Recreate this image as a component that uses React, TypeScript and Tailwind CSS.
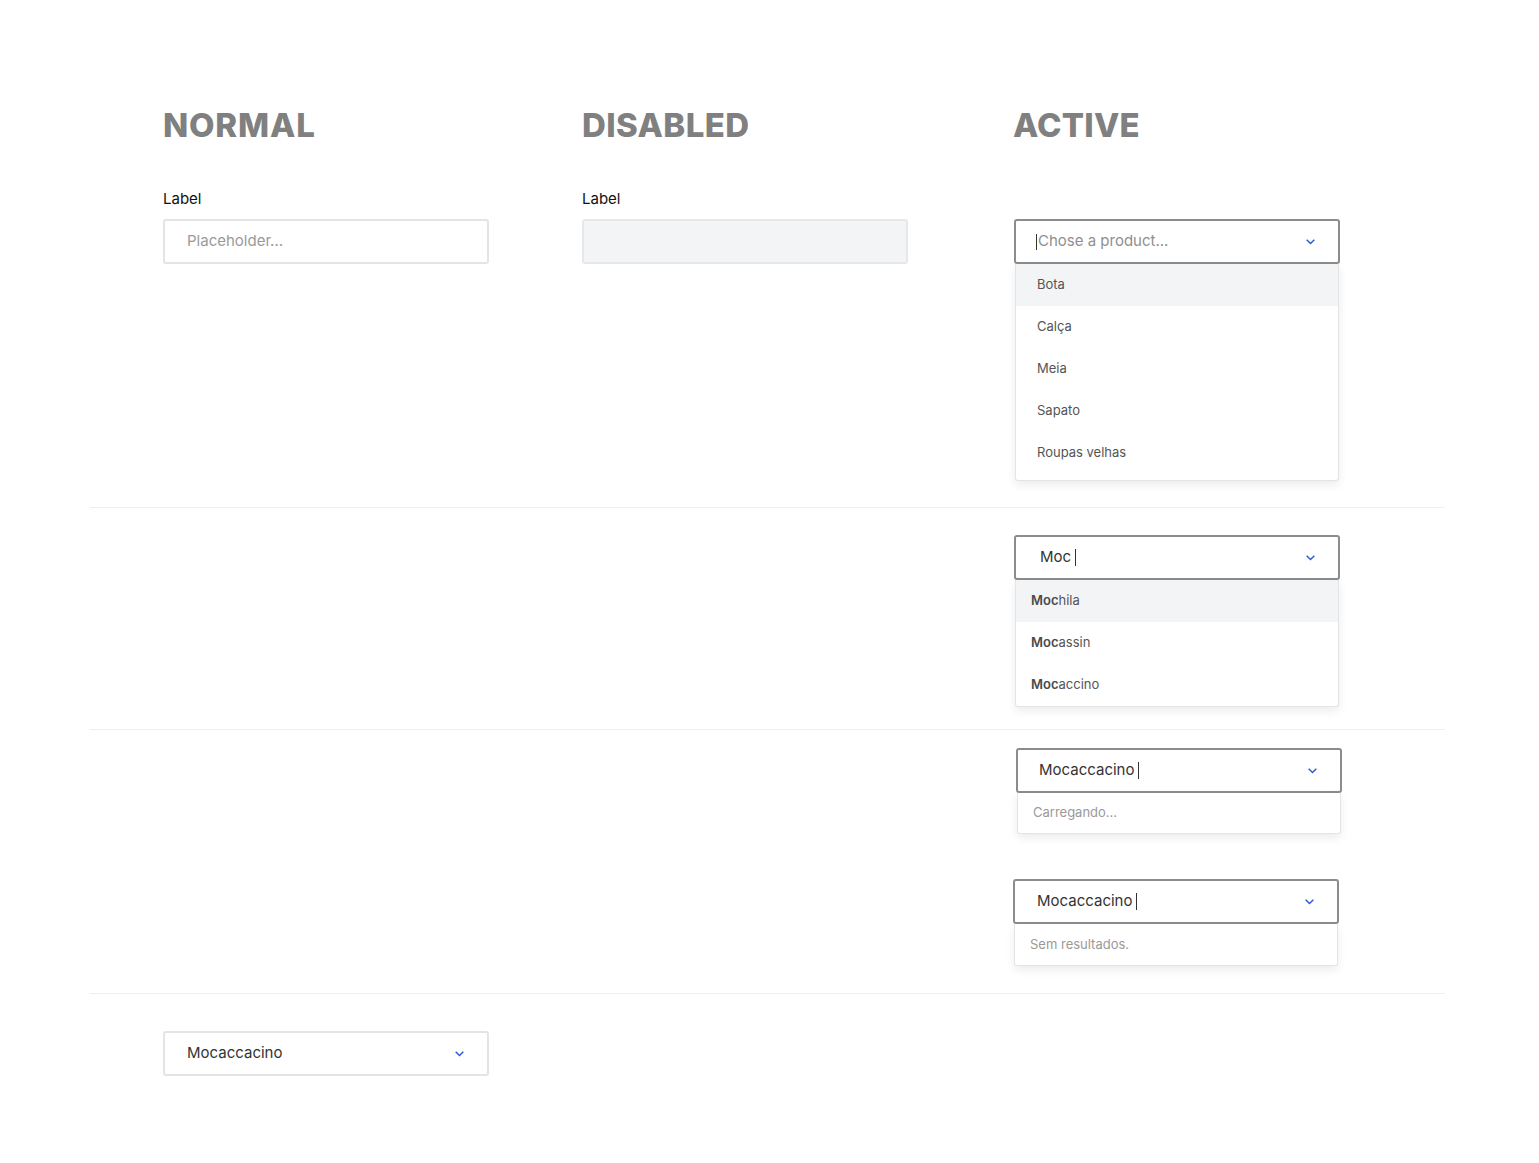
import { useState } from "react";

const Chevron = () => (
  <svg width="9" height="6" viewBox="0 0 9 6" className="shrink-0">
    <path d="M1.2 1.2l3.3 3.3 3.3-3.3" fill="none" stroke="#2f5bd8" strokeWidth="1.5" strokeLinecap="square" />
  </svg>
);

const Caret = () => <span className="inline-block w-px h-[17px] bg-[#333] align-middle ml-[4px]" />;

type ActiveInputProps = { children: React.ReactNode; pl?: string };

const ActiveInput = ({ children, pl = "pl-[23px]" }: ActiveInputProps) => (
  <div className={`flex items-center justify-between h-[45px] w-[326px] border-2 border-[#8c8c8c] rounded-[3px] bg-white ${pl} pr-[23px]`}>
    <div className="text-[15px] text-[#333] flex items-center">{children}</div>
    <Chevron />
  </div>
);

const Menu = ({ children }: { children: React.ReactNode }) => (
  <div className="w-[324px] ml-px bg-white rounded-b-[3px] border border-[#e4e4e4] border-t-0 shadow-[0_4px_10px_rgba(0,0,0,0.08)]">
    {children}
  </div>
);

const products = ["Bota", "Calça", "Meia", "Sapato", "Roupas velhas"];
const matches = ["Mochila", "Mocassin", "Mocaccino"];

const App = () => {
  const [selected] = useState<number>(0);

  return (
    <div className="min-h-screen bg-white font-['Inter',sans-serif] text-[#222]">
      <div className="w-[1355px] ml-[90px] pt-[104px]">
        {/* first row */}
        <div className="grid grid-cols-[419px_431px_326px] pl-[73px] pb-[26px] border-b border-[#efefef]">
          <div>
            <h2 className="text-[33px] leading-[42px] font-extrabold tracking-[0.8px] text-[#808080]">NORMAL</h2>
            <div className="mt-[43px] text-[15px] leading-[20px] text-[#111]">Label</div>
            <div className="mt-[10px] h-[45px] w-[326px] border-2 border-[#e4e4e4] rounded-[3px] flex items-center pl-[22px] text-[15px] text-[#9a9a9a]">
              Placeholder...
            </div>
          </div>
          <div>
            <h2 className="text-[33px] leading-[42px] font-extrabold tracking-[0.4px] text-[#808080]">DISABLED</h2>
            <div className="mt-[43px] text-[15px] leading-[20px] text-[#111]">Label</div>
            <div className="mt-[10px] h-[45px] w-[326px] border-2 border-[#e5e7eb] bg-[#f3f4f6] rounded-[3px]" />
          </div>
          <div>
            <h2 className="text-[33px] leading-[42px] font-extrabold tracking-[0.2px] text-[#808080]">ACTIVE</h2>
            <div className="mt-[73px] ml-px">
              <ActiveInput pl="pl-[20px]">
                <span className="inline-block w-px h-[16px] bg-[#333] mr-px" />
                <span className="text-[#8f8f8f]">Chose a product...</span>
              </ActiveInput>
              <Menu>
                <div className="pb-[6px]">
                  {products.map((p, i) => (
                    <div
                      key={p}
                      className={`h-[42px] flex items-center pl-[21px] text-[13px] text-[#555] ${i === selected ? "bg-[#f3f4f6]" : ""}`}
                    >
                      {p}
                    </div>
                  ))}
                </div>
              </Menu>
            </div>
          </div>
        </div>

        {/* typing row */}
        <div className="grid grid-cols-[419px_431px_326px] pl-[73px] pt-[27px] pb-[22px] border-b border-[#efefef]">
          <div />
          <div />
          <div className="ml-px">
            <ActiveInput pl="pl-[24px]">
              Moc
              <Caret />
            </ActiveInput>
            <Menu>
              {matches.map((m, i) => (
                <div
                  key={m}
                  className={`h-[42px] flex items-center pl-[15px] text-[13px] text-[#555] ${i === 0 ? "bg-[#f3f4f6] h-[41px]" : ""}`}
                >
                  <span className="font-semibold text-[#4a4a4a]">Moc</span>
                  {m.slice(3)}
                </div>
              ))}
            </Menu>
          </div>
        </div>

        {/* loading / empty row */}
        <div className="grid grid-cols-[419px_431px_326px] pl-[73px] pt-[18px] pb-[27px] border-b border-[#efefef]">
          <div />
          <div />
          <div>
            <div className="ml-[3px]">
              <ActiveInput pl="pl-[21px]">
                Mocaccacino
                <Caret />
              </ActiveInput>
              <Menu>
                <div className="h-[40px] flex items-center pl-[15px] text-[13px] text-[#9a9a9a]">Carregando...</div>
              </Menu>
            </div>
            <div className="mt-[45px]">
              <ActiveInput pl="pl-[22px]">
                Mocaccacino
                <Caret />
              </ActiveInput>
              <Menu>
                <div className="h-[41px] flex items-center pl-[15px] text-[13px] text-[#9a9a9a]">Sem resultados.</div>
              </Menu>
            </div>
          </div>
        </div>

        {/* selected row */}
        <div className="pl-[73px] pt-[37px] pb-[87px]">
          <div className="flex items-center justify-between h-[45px] w-[326px] border-2 border-[#e4e4e4] rounded-[3px] pl-[22px] pr-[23px]">
            <span className="text-[15px] text-[#333]">Mocaccacino</span>
            <Chevron />
          </div>
        </div>
      </div>
    </div>
  );
};

export default App;
